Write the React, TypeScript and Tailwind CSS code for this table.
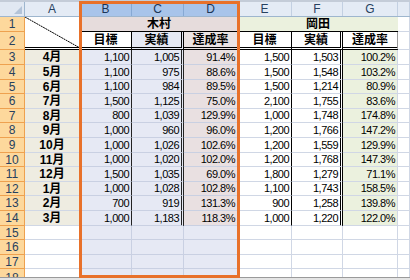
import React from 'react';

type Row = [string, string, string, string, string, string, string];

// 月別 目標/実績
const DATA: Row[] = [
  ['4月', '1,100', '1,005', '91.4%', '1,500', '1,503', '100.2%'],
  ['5月', '1,100', '975', '88.6%', '1,500', '1,548', '103.2%'],
  ['6月', '1,100', '984', '89.5%', '1,500', '1,214', '80.9%'],
  ['7月', '1,500', '1,125', '75.0%', '2,100', '1,755', '83.6%'],
  ['8月', '800', '1,039', '129.9%', '1,000', '1,748', '174.8%'],
  ['9月', '1,000', '960', '96.0%', '1,200', '1,766', '147.2%'],
  ['10月', '1,000', '1,026', '102.6%', '1,200', '1,559', '129.9%'],
  ['11月', '1,000', '1,020', '102.0%', '1,200', '1,768', '147.3%'],
  ['12月', '1,500', '1,035', '69.0%', '1,800', '1,279', '71.1%'],
  ['1月', '1,000', '1,028', '102.8%', '1,100', '1,743', '158.5%'],
  ['2月', '700', '919', '131.3%', '900', '1,258', '139.8%'],
  ['3月', '1,000', '1,183', '118.3%', '1,000', '1,220', '122.0%'],
];

const GRID = 'grid grid-cols-[25px_55px_52px_52px_54px_54px_51px_55px_12px]';
const ROW_H = [15, 15, 14, 15, 14, 15, 15, 14, 15, 14, 15, 15, 14, 15, 14];
const NUM = "font-['Liberation_Sans',sans-serif] text-[11px] tracking-[-0.5px] text-black";
const JP = "font-['Liberation_Sans','Noto_Sans_CJK_JP',sans-serif]";
const GRIDLINE = 'border-[#d0d7e5]';

function RowHeader({ n, h, last }: { n: number; h?: string; last?: boolean }) {
  return (
    <div
      className={`flex items-center justify-center overflow-hidden bg-[#fdd89c] border-r border-[#eea14f] ${
        last ? '' : 'border-b'
      } ${h ?? ''} font-['Liberation_Sans',sans-serif] text-[12px] leading-none text-[#27415f]`}
    >
      <span className={last ? 'pt-[10px]' : ''}>{n}</span>
    </div>
  );
}

function ColHeaders() {
  const cols = ['A', 'B', 'C', 'D', 'E', 'F', 'G', ''];
  return (
    <div className={`${GRID} h-[15px] border-b border-[#9eb6ce]`}>
      <div className="relative bg-[#e1e8f2] border-r border-[#9eb6ce]">
        <svg className="absolute right-[2px] bottom-[2px]" width="8" height="8" viewBox="0 0 8 8">
          <polygon points="8,0 8,8 0,8" fill="#b3c3d8" />
        </svg>
      </div>
      {cols.map((c, i) => {
        const sel = c === 'B' || c === 'C' || c === 'D';
        return (
          <div
            key={i}
            className={`flex items-center justify-center border-r font-['Liberation_Sans',sans-serif] text-[12px] leading-none ${
              sel
                ? 'bg-[#a8c4ea] border-[#87a9d4] text-[#1c3557]'
                : 'bg-[#e4ebf5] border-[#c3d0e2] text-[#27415f]'
            }`}
          >
            {c}
          </div>
        );
      })}
    </div>
  );
}

function TitleRows() {
  const head = `flex items-center justify-center ${JP} text-[12px] font-bold leading-none text-black border-b-[3px] border-double border-b-black`;
  return (
    <div className={`${GRID} grid-rows-[15px_18px]`}>
      <RowHeader n={1} />
      <div className={`relative row-span-2 bg-white border-r ${GRIDLINE} border-b-[3px] border-double border-b-black`}>
        <svg className="absolute left-0 top-0" width="55" height="31" viewBox="0 0 55 31">
          <line x1="0" y1="0" x2="55" y2="31" stroke="#000" strokeWidth="1" strokeDasharray="2 0.6" />
        </svg>
      </div>
      <div className={`col-span-3 flex items-center justify-center bg-[#e6dcdc] border-b border-black ${JP} text-[12px] font-bold leading-none text-black`}>
        木村
      </div>
      <div className={`col-span-3 flex items-center justify-center bg-[#ebf1de] border-b border-black ${JP} text-[12px] font-bold leading-none text-black`}>
        岡田
      </div>
      <div className={`bg-white border-r border-b ${GRIDLINE}`} />

      <RowHeader n={2} />
      <div className={`${head} bg-white border-r border-r-black`}>目標</div>
      <div className={`${head} bg-[#e6e9f4] border-r-[3px] border-r-black`}>実績</div>
      <div className={`${head} bg-[#ebe3e3] border-r border-r-black`}>達成率</div>
      <div className={`${head} bg-white border-r border-r-black`}>目標</div>
      <div className={`${head} bg-white border-r-[3px] border-r-black`}>実績</div>
      <div className={`${head} bg-white border-r border-r-[#9a9a9a]`}>達成率</div>
      <div className={`bg-white border-r border-b ${GRIDLINE}`} />
    </div>
  );
}

function DataRow({ row, n, h }: { row: Row; n: number; h: string }) {
  const [m, b, c, d, e, f, g] = row;
  const num = `flex items-center justify-end pr-[2px] ${NUM} leading-none`;
  return (
    <div className={`${GRID} ${h}`}>
      <RowHeader n={n} />
      <div className={`flex items-center justify-center bg-[#eeece1] border-r border-b ${GRIDLINE} ${JP} text-[12px] font-bold leading-none text-black`}>
        {m}
      </div>
      <div className={`${num} bg-[#e6e9f4] border-b border-b-[#c9d0e2] border-r border-r-[#222]`}>{b}</div>
      <div className={`${num} bg-[#e6e9f4] border-b border-b-[#c9d0e2] border-r-[3px] border-double border-r-[#222]`}>{c}</div>
      <div className={`${num} bg-[#e9e0e1] border-b border-b-[#c9d0e2] border-r border-r-[#c9d0e2]`}>{d}</div>
      <div className={`${num} bg-white border-b ${GRIDLINE} border-r border-r-black`}>{e}</div>
      <div className={`${num} bg-white border-b ${GRIDLINE} border-r-[3px] border-double border-r-black`}>{f}</div>
      <div className={`${num} bg-[#ebf1de] border-b ${GRIDLINE} border-r border-r-[#d0d7e5]`}>{g}</div>
      <div className={`bg-white border-r border-b ${GRIDLINE}`} />
    </div>
  );
}

function EmptyRow({ n, h, last }: { n: number; h: string; last?: boolean }) {
  const b = last ? '' : 'border-b';
  return (
    <div className={`${GRID} ${h}`}>
      <RowHeader n={n} last={last} />
      <div className={`bg-white border-r ${b} ${GRIDLINE}`} />
      <div className={`bg-[#e6e9f4] border-r ${b} border-[#c9d0e2]`} />
      <div className={`bg-[#e6e9f4] border-r ${b} border-[#c9d0e2]`} />
      <div className={`bg-[#e6e9f4] border-r ${b} border-[#c9d0e2]`} />
      <div className={`bg-white border-r ${b} ${GRIDLINE}`} />
      <div className={`bg-white border-r ${b} ${GRIDLINE}`} />
      <div className={`bg-white border-r ${b} ${GRIDLINE}`} />
      <div className={`bg-white border-r ${b} ${GRIDLINE}`} />
    </div>
  );
}

export default function App() {
  const heightClass = (h: number) => (h === 15 ? 'h-[15px]' : 'h-[14px]');
  return (
    <div className="relative w-[410px] h-[280px] overflow-hidden bg-white">
      <div className="h-[2px] bg-[#c4ccd8]" />
      <ColHeaders />
      <TitleRows />
      {DATA.map((row, i) => (
        <DataRow key={i} row={row} n={i + 3} h={heightClass(ROW_H[i])} />
      ))}
      {[15, 16, 17].map((n) => (
        <EmptyRow key={n} n={n} h={heightClass(ROW_H[n - 3])} />
      ))}
      <EmptyRow n={18} h="h-[8px]" last />
      <div className="h-[1px] bg-[#9a9a9a]" />
      <div className="h-[2px] bg-[#e4e4e4]" />

      {/* 選択範囲の枠 */}
      <div className="pointer-events-none absolute left-[79px] top-[1px] w-[161px] h-[277px] border-[3px] border-[#e8712a]" />
    </div>
  );
}
